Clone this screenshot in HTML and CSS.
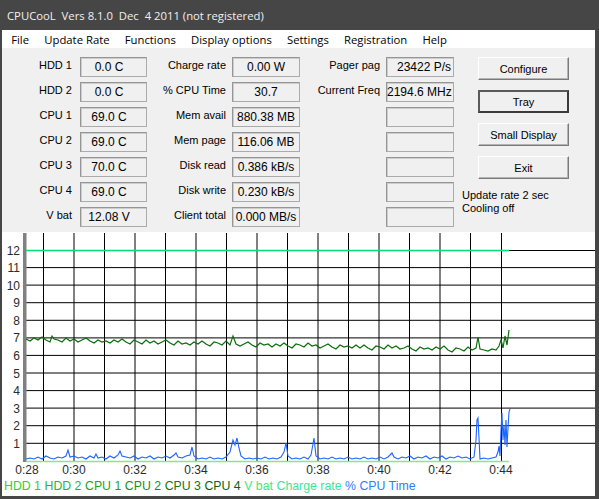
FILE: index.html
```html
<!DOCTYPE html>
<html>
<head>
<meta charset="utf-8">
<link rel="stylesheet" href="styles.css">
</head>
<body>
<div class="window">
  <div class="titlebar">CPUCooL&nbsp; Vers 8.1.0&nbsp; Dec&nbsp; 4 2011 (not registered)</div>
  <div class="menubar">
    <span>File</span><span>Update Rate</span><span>Functions</span><span>Display options</span><span>Settings</span><span>Registration</span><span>Help</span>
  </div>
  <div class="client">
    <div class="panel">
      <div class="fields">
        <div class="label l1">HDD 1</div><div class="box c1">0.0 C</div>
        <div class="label">Charge rate</div><div class="box c2">0.00 W</div>
        <div class="label">Pager pag</div><div class="box c3">23422 P/s</div>

        <div class="label l1">HDD 2</div><div class="box c1">0.0 C</div>
        <div class="label">% CPU Time</div><div class="box c2">30.7</div>
        <div class="label">Current Freq</div><div class="box c3">2194.6 MHz</div>

        <div class="label l1">CPU 1</div><div class="box c1">69.0 C</div>
        <div class="label">Mem avail</div><div class="box c2">880.38 MB</div>
        <div class="label"></div><div class="box c3"></div>

        <div class="label l1">CPU 2</div><div class="box c1">69.0 C</div>
        <div class="label">Mem page</div><div class="box c2">116.06 MB</div>
        <div class="label"></div><div class="box c3"></div>

        <div class="label l1">CPU 3</div><div class="box c1">70.0 C</div>
        <div class="label">Disk read</div><div class="box c2">0.386 kB/s</div>
        <div class="label"></div><div class="box c3"></div>

        <div class="label l1">CPU 4</div><div class="box c1">69.0 C</div>
        <div class="label">Disk write</div><div class="box c2">0.230 kB/s</div>
        <div class="label"></div><div class="box c3"></div>

        <div class="label l1">V bat</div><div class="box c1">12.08 V</div>
        <div class="label">Client total</div><div class="box c2">0.000 MB/s</div>
        <div class="label"></div><div class="box c3"></div>
      </div>
      <div class="side">
        <div class="btn">Configure</div>
        <div class="btn default">Tray</div>
        <div class="btn">Small Display</div>
        <div class="btn">Exit</div>
        <div class="status">Update rate 2 sec<br>Cooling off</div>
      </div>
    </div>
    <div class="chart">
      <svg class="plot" width="593" height="246" viewBox="2 232 593 246" xmlns="http://www.w3.org/2000/svg">
        <rect x="2" y="232" width="593" height="246" fill="#ffffff"/>
        <g stroke="#000" stroke-width="1">
          <line x1="43.5" y1="233" x2="43.5" y2="462"/>
          <line x1="74" y1="233" x2="74" y2="462"/>
          <line x1="104.5" y1="233" x2="104.5" y2="462"/>
          <line x1="135" y1="233" x2="135" y2="462"/>
          <line x1="165.5" y1="233" x2="165.5" y2="462"/>
          <line x1="196" y1="233" x2="196" y2="462"/>
          <line x1="226.5" y1="233" x2="226.5" y2="462"/>
          <line x1="257" y1="233" x2="257" y2="462"/>
          <line x1="287.5" y1="233" x2="287.5" y2="462"/>
          <line x1="318" y1="233" x2="318" y2="462"/>
          <line x1="348.5" y1="233" x2="348.5" y2="462"/>
          <line x1="379" y1="233" x2="379" y2="462"/>
          <line x1="409.5" y1="233" x2="409.5" y2="462"/>
          <line x1="440" y1="233" x2="440" y2="462"/>
          <line x1="470.5" y1="233" x2="470.5" y2="462"/>
          <line x1="501.5" y1="233" x2="501.5" y2="462"/>
          <line x1="26" y1="250.5" x2="595" y2="250.5"/>
          <line x1="26" y1="267.6" x2="595" y2="267.6"/>
          <line x1="26" y1="285.1" x2="595" y2="285.1"/>
          <line x1="26" y1="302.7" x2="595" y2="302.7"/>
          <line x1="26" y1="320.3" x2="595" y2="320.3"/>
          <line x1="26" y1="337.9" x2="595" y2="337.9"/>
          <line x1="26" y1="355.4" x2="595" y2="355.4"/>
          <line x1="26" y1="373" x2="595" y2="373"/>
          <line x1="26" y1="390.6" x2="595" y2="390.6"/>
          <line x1="26" y1="408.1" x2="595" y2="408.1"/>
          <line x1="26" y1="425.7" x2="595" y2="425.7"/>
          <line x1="26" y1="443.3" x2="595" y2="443.3"/>
        </g>
        <rect x="23" y="233" width="3.5" height="229" fill="#808080"/>
        <g class="ylab" text-anchor="end">
          <text x="20" y="254.5">12</text>
          <text x="20" y="272">11</text>
          <text x="20" y="289.6">10</text>
          <text x="20" y="307.2">9</text>
          <text x="20" y="324.8">8</text>
          <text x="20" y="342.4">7</text>
          <text x="20" y="359.9">6</text>
          <text x="20" y="377.5">5</text>
          <text x="20" y="395.1">4</text>
          <text x="20" y="412.6">3</text>
          <text x="20" y="430.2">2</text>
          <text x="20" y="447.8">1</text>
        </g>
        <line x1="26" y1="250.5" x2="509" y2="250.5" stroke="#00e070" stroke-width="1.6"/>
        <line x1="26" y1="461.5" x2="509" y2="461.5" stroke="#86e886" stroke-width="1.6"/>
        <polyline fill="none" stroke="#0a6e0a" stroke-width="1.2" points="26,339 30,341 34,338 38,340 42,337 46,340 50,342 52,336 54,339 58,340 62,342 66,338 70,341 74,339 78,342 82,340 86,338 90,341 94,343 98,340 102,342 106,341 110,343 114,340 118,342 122,339 126,342 130,344 134,340 138,342 142,344 146,340 150,343 154,341 158,344 162,342 166,340 170,343 174,345 178,341 182,344 186,343 190,345 194,342 198,344 202,341 206,344 210,346 214,342 218,343 222,345 226,341 230,345 233,336 236,344 240,346 244,344 248,342 252,345 256,347 260,343 264,345 268,344 272,347 276,344 280,346 284,343 288,346 292,348 296,344 300,345 304,347 308,343 312,346 316,345 320,348 324,346 328,344 332,347 336,349 340,345 344,347 348,346 352,348 356,345 360,348 364,345 368,348 372,350 376,346 380,347 384,349 388,345 392,348 396,346 400,349 404,348 408,346 412,349 416,351 420,347 424,349 428,348 432,350 436,347 440,349 444,346 448,350 452,352 456,348 460,349 464,351 468,347 472,350 476,348 478,337 480,349 484,350 488,351 492,349 496,350 499,346 501,340 503,348 505,336 507,345 509,330"/>
        <polyline fill="none" stroke="#1e64ff" stroke-width="1.1" points="26,459 30,458 34,459 38,457 42,459 46,456 50,458 54,459 58,457 62,458 66,456 68,450 70,457 74,456 78,458 82,457 86,459 90,456 94,458 96,454 98,458 102,457 106,459 110,456 114,458 118,455 120,451 122,456 126,457 130,458 134,456 138,459 142,457 146,458 150,456 154,459 158,457 162,458 166,456 170,458 174,455 176,453 178,457 182,458 186,456 190,455 192,447 194,456 198,459 202,458 206,459 210,457 214,459 218,458 222,459 226,457 230,452 233,440 235,445 237,438 239,448 241,456 245,459 249,458 253,459 257,458 261,459 265,457 269,459 273,458 277,459 281,457 284,452 286,443 288,456 292,459 296,458 300,459 304,457 308,459 311,455 313,444 314,438 316,456 320,459 324,458 328,459 332,457 336,459 340,458 344,459 348,457 352,459 356,458 360,459 364,457 368,459 372,458 376,459 380,457 384,459 388,457 392,453 394,457 398,459 402,457 406,458 410,456 414,459 418,457 422,458 426,456 430,459 434,457 438,458 442,456 446,459 450,457 454,458 458,456 462,458 466,457 470,459 474,457 476,440 477,420 478,418 479,438 480,459 484,458 488,459 492,458 496,457 498,452 499,446 500,456 501,430 502,413 503,440 504,425 505,445 506,420 507,447 508,428 509,412 510,409"/>
        <g class="xlab" text-anchor="middle">
          <text x="27" y="474">0:28</text>
          <text x="74" y="474">0:30</text>
          <text x="135" y="474">0:32</text>
          <text x="196" y="474">0:34</text>
          <text x="257" y="474">0:36</text>
          <text x="318" y="474">0:38</text>
          <text x="379" y="474">0:40</text>
          <text x="440" y="474">0:42</text>
          <text x="501" y="474">0:44</text>
        </g>
      </svg>
    </div>
    <div class="legend">
      <span class="g1">HDD 1</span>
      <span class="g2">HDD 2</span>
      <span class="g3">CPU 1</span>
      <span class="g4">CPU 2</span>
      <span class="g5">CPU 3</span>
      <span class="g6">CPU 4</span>
      <span class="g7">V bat</span>
      <span class="g8">Charge rate</span>
      <span class="g9">% CPU Time</span>
    </div>
  </div>
</div>
</body>
</html>
```

FILE: styles.css
```css
html, body {
  margin: 0;
  padding: 0;
}
body {
  width: 599px;
  height: 499px;
  overflow: hidden;
  background: #464646;
  font-family: "Liberation Sans", Arial, sans-serif;
  color: #000;
}
.window {
  height: 499px;
  box-sizing: border-box;
  padding: 0 4px 3px 2px;
  display: flex;
  flex-direction: column;
}
.titlebar {
  height: 30px;
  flex: none;
  display: flex;
  align-items: center;
  padding-left: 5px;
  color: #f0f0f0;
  font-family: "Open Sans", sans-serif;
  font-size: 11.3px;
  white-space: nowrap;
}
.menubar {
  height: 18px;
  flex: none;
  background: #ffffff;
  display: flex;
  align-items: center;
  padding-left: 2px;
  font-family: "Open Sans", sans-serif;
  font-size: 11.3px;
  white-space: nowrap;
}
.menubar span {
  padding: 0 7.6px;
}
.menubar span:first-child {
  padding-left: 7.2px;
}
.client {
  flex: 1;
  background: #f0f0f0;
  display: flex;
  flex-direction: column;
}
.panel {
  height: 184px;
  flex: none;
  box-sizing: border-box;
  padding-top: 9px;
  display: flex;
}
.fields {
  display: grid;
  grid-template-columns: 78px 67px 85px 68px 86px 68px;
  grid-auto-rows: 25px;
  align-content: start;
}
.label {
  text-align: right;
  padding-right: 6px;
  padding-top: 1px;
  font-size: 11px;
  line-height: 14px;
  white-space: nowrap;
}
.label.l1 {
  padding-right: 8px;
}
.box {
  height: 20px;
  box-sizing: border-box;
  border: 1px solid #ababab;
  border-top-color: #959595;
  border-left-color: #959595;
  box-shadow: inset 1px 1px 0 #cdcdcd;
  font-size: 12px;
  line-height: 19px;
  white-space: nowrap;
  overflow: hidden;
}
.c1 {
  text-align: center;
  padding-right: 9px;
}
.c2 {
  text-align: center;
}
.c3 {
  text-align: right;
  padding-right: 2px;
}
.side {
  margin-left: 8px;
  display: flex;
  flex-direction: column;
  gap: 10px;
}
.btn {
  margin-left: 16px;
  width: 91px;
  height: 23px;
  box-sizing: border-box;
  border: 1px solid;
  border-color: #ffffff #7a7a7a #7a7a7a #ffffff;
  box-shadow: inset -1px -1px 0 #b4b4b4;
  background: #f0f0f0;
  font-size: 11px;
  display: flex;
  align-items: center;
  justify-content: center;
}
.btn.default {
  border: 2px solid #5a5a5a;
  border-right-color: #3a3a3a;
  border-bottom-color: #3a3a3a;
  box-shadow: none;
}
.status {
  font-size: 11px;
  line-height: 13px;
  white-space: nowrap;
}
.chart {
  flex: 1;
  overflow: hidden;
}
.plot {
  display: block;
}
.ylab text, .xlab text {
  font-family: "Liberation Sans", Arial, sans-serif;
  font-size: 12px;
  fill: #2b2b2b;
}
.legend {
  height: 18px;
  flex: none;
  background: #ffffff;
  display: flex;
  gap: 3.6px;
  padding-left: 2px;
  font-size: 12.3px;
  line-height: 17px;
  white-space: nowrap;
}
.g1 { color: #33cc33; }
.g2 { color: #2db52d; }
.g3 { color: #26a026; }
.g4 { color: #1e8c1e; }
.g5 { color: #157515; }
.g6 { color: #0d5f0d; }
.g7 { color: #3ee87a; }
.g8 { color: #33e899; }
.g9 { color: #2f7bff; }
```
